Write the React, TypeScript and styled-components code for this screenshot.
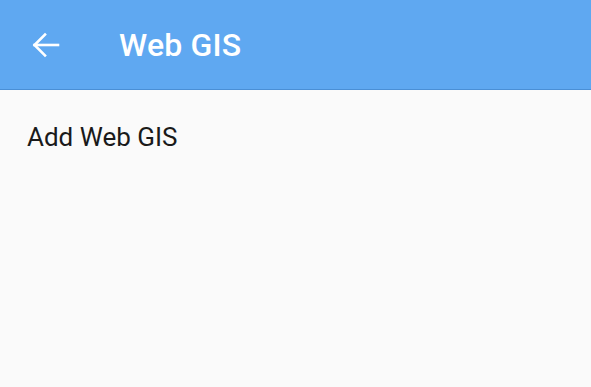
import React from "react"
import styled, { createGlobalStyle } from "styled-components"

const GlobalStyle = createGlobalStyle`
	html, body {
		margin: 0;
		padding: 0;
		background: #fafafa;
		font-family: Roboto, "Liberation Sans", sans-serif;
	}
`

const Screen = styled.div`
	width: 591px;
	height: 387px;
	display: flex;
	flex-direction: column;
	background: #fafafa;
	overflow: hidden;
`

const Toolbar = styled.header`
	height: 90px;
	flex-shrink: 0;
	display: flex;
	align-items: center;
	background: #5fa8f1;
	border-bottom: 1px solid #4a8fd6;
	box-sizing: border-box;
	padding-left: 31px;
	padding-top: 1px;
`

const BackButton = styled.button`
	width: 30px;
	height: 30px;
	display: flex;
	align-items: center;
	justify-content: center;
	padding: 0;
	border: none;
	background: none;
	cursor: pointer;
`

const Title = styled.h1`
	margin: 0 0 0 58px;
	font-size: 32px;
	font-weight: 500;
	color: #ffffff;
	letter-spacing: 0.2px;
`

const List = styled.div`
	display: flex;
	flex-direction: column;
`

const ListItem = styled.div`
	height: 92px;
	display: flex;
	align-items: center;
	padding-left: 27px;
	padding-top: 2px;
	font-size: 26px;
	color: #1a1a1a;
	box-sizing: border-box;
`

const App: React.FC = () => {
	return (
		<>
			<GlobalStyle />
			<Screen>
				<Toolbar>
					<BackButton aria-label="Back">
						<svg width="30" height="30" viewBox="0 0 30 30" fill="none" stroke="#ffffff" strokeWidth="2.6" strokeLinecap="square">
							<path d="M3.5 15 H27" />
							<path d="M14 4.5 L3.5 15 L14 25.5" />
						</svg>
					</BackButton>
					<Title>Web GIS</Title>
				</Toolbar>
				<List>
					<ListItem>Add Web GIS</ListItem>
				</List>
			</Screen>
		</>
	)
}

export default App
